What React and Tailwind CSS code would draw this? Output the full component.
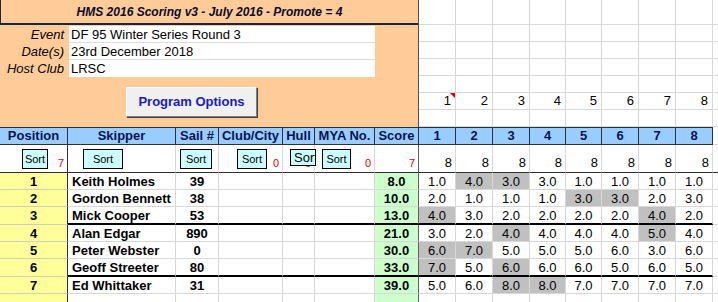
const raceCols = ['w-[37px]', 'w-[37px]', 'w-[37px]', 'w-[36px]', 'w-[36px]', 'w-[37px]', 'w-[37px]', 'w-[37px]'];

const rows = [
  { pos: 1, name: 'Keith Holmes', sail: '39', score: '8.0', r: [1, 4, 3, 3, 1, 1, 1, 1], d: [1, 2] },
  { pos: 2, name: 'Gordon Bennett', sail: '38', score: '10.0', r: [2, 1, 1, 1, 3, 3, 2, 3], d: [4, 5] },
  { pos: 3, name: 'Mick Cooper', sail: '53', score: '13.0', r: [4, 3, 2, 2, 2, 2, 4, 2], d: [0, 6], sep: true },
  { pos: 4, name: 'Alan Edgar', sail: '890', score: '21.0', r: [3, 2, 4, 4, 4, 4, 5, 4], d: [2, 6] },
  { pos: 5, name: 'Peter Webster', sail: '0', score: '30.0', r: [6, 7, 5, 5, 5, 6, 3, 6], d: [0, 1] },
  { pos: 6, name: 'Geoff Streeter', sail: '80', score: '33.0', r: [7, 5, 6, 6, 6, 5, 6, 5], d: [0, 2], sep: true },
  { pos: 7, name: 'Ed Whittaker', sail: '31', score: '39.0', r: [5, 6, 8, 8, 7, 7, 7, 7], d: [2, 3] },
];

const heads = [
  ['Position', 'w-[68px]'],
  ['Skipper', 'w-[108px]'],
  ['Sail #', 'w-[43px]'],
  ['Club/City', 'w-[64px]'],
  ['Hull', 'w-[32px]'],
  ['MYA No.', 'w-[60px]'],
  ['Score', 'w-[44px]'],
];

function SortButton({ className }) {
  return (
    <div className={`absolute top-[4px] flex items-center justify-center border border-black bg-[#ccffff] text-[11px] leading-none text-black ${className}`}>
      Sort
    </div>
  );
}

function TopRight() {
  const heights = ['h-[25px]', 'h-[17px]', 'h-[17px]', 'h-[17px]', 'h-[17px]', 'h-[17px]', 'h-[17px]'];
  return (
    <div className="flex flex-col">
      {heights.map((h, ri) => (
        <div key={ri} className={`flex ${h}`}>
          {raceCols.map((w, ci) => (
            <div key={ci} className={`relative ${w} border-b border-r border-[#d8d8d8] flex items-center justify-end pr-[4px] text-[13px]`}>
              {ri === 5 ? ci + 1 : ''}
              {ri === 5 && ci === 0 && (
                <div className="absolute right-0 top-0 w-0 h-0 border-l-[5px] border-l-transparent border-t-[5px] border-t-[#e00000]" />
              )}
            </div>
          ))}
          <div className="w-[5px] border-b border-[#d8d8d8]" />
        </div>
      ))}
    </div>
  );
}

function Header() {
  return (
    <div className="flex h-[18px]">
      {heads.map(([t, w]) => (
        <div key={t} className={`${w} bg-[#99ccff] border-t border-b border-r border-[#303030] flex items-center justify-center font-bold text-[13px] text-[#0c1450]`}>
          {t}
        </div>
      ))}
      {raceCols.map((w, i) => (
        <div key={i} className={`${w} bg-[#99ccff] border-t border-b border-r border-[#303030] flex items-center justify-center font-bold text-[13px] text-[#0c1450]`}>
          {i + 1}
        </div>
      ))}
      <div className="w-[5px] border-b border-[#d8d8d8]" />
    </div>
  );
}

function SortRow() {
  const red = 'text-[11px] text-[#e00000] leading-none';
  const cell = 'relative h-[28px] border-b border-r flex items-end justify-end pr-[3px] pb-[3px]';
  return (
    <div className="flex">
      <div className={`${cell} w-[68px] border-b-[#303030] border-r-[#303030]`}>
        <SortButton className="left-[22px] w-[26px] h-[20px]" />
        <span className={red}>7</span>
      </div>
      <div className={`${cell} w-[108px] border-b-[#303030] border-r-[#d8d8d8]`}>
        <SortButton className="left-[15px] w-[40px] h-[20px]" />
      </div>
      <div className={`${cell} w-[43px] border-b-[#303030] border-r-[#d8d8d8]`}>
        <SortButton className="left-[4px] w-[32px] h-[20px]" />
      </div>
      <div className={`${cell} w-[64px] border-b-[#303030] border-r-[#d8d8d8]`}>
        <SortButton className="left-[18px] w-[30px] h-[20px]" />
        <span className={red}>0</span>
      </div>
      <div className={`${cell} w-[32px] border-b-[#303030] border-r-[#d8d8d8]`}>
        <span className={red}>0</span>
        <div className="absolute top-[4px] left-[7px] w-[26px] h-[17px] pl-[3px] pt-[1px] overflow-hidden whitespace-nowrap border border-black bg-[#ccffff] text-[13px] leading-[13px]">
          Sort
        </div>
      </div>
      <div className={`${cell} w-[60px] border-b-[#303030] border-r-[#d8d8d8]`}>
        <SortButton className="left-[7px] w-[29px] h-[20px]" />
        <span className={red}>0</span>
      </div>
      <div className={`${cell} w-[44px] border-b-[#303030] border-r-[#606060]`}>
        <span className={red}>7</span>
      </div>
      {raceCols.map((w, i) => (
        <div key={i} className={`${cell} ${w} border-b-[#303030] border-r-[#d8d8d8] pb-[2px]`}>
          <span className="text-[13px] leading-none">8</span>
        </div>
      ))}
      <div className="w-[5px] h-[28px] border-b border-[#303030]" />
    </div>
  );
}

function DataRow({ row }) {
  const h = row.sep ? 'h-[18px]' : 'h-[17px]';
  const b = row.sep ? 'border-b-2 border-b-black' : 'border-b border-b-[#d8d8d8]';
  return (
    <div className="flex text-[13px] leading-none">
      <div className={`${h} w-[68px] bg-[#ffff99] border-b border-b-[#d0d0c0] border-r border-r-[#303030] flex items-center justify-center font-bold`}>
        {row.pos}
      </div>
      <div className={`${h} w-[108px] ${b} border-r border-r-[#d8d8d8] flex items-center pl-[4px] font-bold`}>
        {row.name}
      </div>
      <div className={`${h} w-[43px] ${b} border-r border-r-[#d8d8d8] flex items-center justify-center font-bold`}>
        {row.sail}
      </div>
      <div className={`${h} w-[64px] ${b} border-r border-r-[#d8d8d8]`} />
      <div className={`${h} w-[32px] ${b} border-r border-r-[#d8d8d8]`} />
      <div className={`${h} w-[60px] ${b} border-r border-r-[#d8d8d8]`} />
      <div className={`${h} w-[44px] bg-[#ccffcc] ${b} border-r border-r-[#606060] flex items-center justify-center font-bold`}>
        {row.score}
      </div>
      {row.r.map((v, i) => (
        <div key={i} className={`${h} ${raceCols[i]} ${b} border-r border-r-[#d8d8d8] flex items-center justify-center ${row.d.includes(i) ? 'bg-[#c0c0c0]' : ''}`}>
          {v.toFixed(1)}
        </div>
      ))}
      <div className={`${h} w-[5px] border-b border-b-[#d8d8d8]`} />
    </div>
  );
}

export default function App() {
  return (
    <div className="w-[718px] h-[302px] overflow-hidden bg-white text-black" style={{ fontFamily: '"Liberation Sans", Arial, sans-serif' }}>
      <div className="flex h-[127px]">
        <div className="w-[419px] h-[127px] bg-[#ffcc99] border-r border-r-[#505050] flex flex-col">
          <div className="h-[25px] border-l border-l-[#1c2540] border-b-2 border-b-[#1c2540] flex items-center justify-center italic font-bold text-[12px] text-[#0a0a28]">
            HMS 2016 Scoring v3 - July 2016 - Promote = 4
          </div>
          <div className="flex mt-[1px]">
            <div className="w-[68px] flex flex-col items-end pr-[4px] italic text-[13px]">
              <div className="h-[17px] leading-[17px]">Event</div>
              <div className="h-[17px] leading-[17px]">Date(s)</div>
              <div className="h-[17px] leading-[17px]">Host Club</div>
            </div>
            <div className="w-[306px] ml-[1px] bg-white flex flex-col text-[13px]">
              <div className="h-[17px] leading-[17px] pl-[2px] border-b border-[#dcdcdc]">DF 95 Winter Series Round 3</div>
              <div className="h-[17px] leading-[17px] pl-[2px] border-b border-[#dcdcdc]">23rd December 2018</div>
              <div className="h-[16px] leading-[17px] pl-[2px]">LRSC</div>
            </div>
          </div>
          <div className="pl-[126px] pt-[10px]">
            <div className="w-[131px] h-[30px] bg-[#f0f0f0] border border-t-white border-l-white border-b-[#808080] border-r-[#808080] shadow-[1px_1px_0_#404040] flex items-center justify-center font-bold text-[13px] text-[#1a1acc]">
              Program Options
            </div>
          </div>
        </div>
        <TopRight />
      </div>
      <Header />
      <SortRow />
      {rows.map(r => (
        <DataRow key={r.pos} row={r} />
      ))}
      <div className="flex h-[10px]">
        <div className="w-[68px] bg-[#ffff99] border-r border-r-[#303030]" />
        <div className="w-[108px] border-r border-[#d8d8d8]" />
        <div className="w-[43px] border-r border-[#d8d8d8]" />
        <div className="w-[64px] border-r border-[#d8d8d8]" />
        <div className="w-[32px] border-r border-[#d8d8d8]" />
        <div className="w-[60px] border-r border-[#d8d8d8]" />
        <div className="w-[44px] bg-[#ccffcc] border-r border-r-[#606060]" />
        {raceCols.map((w, i) => (
          <div key={i} className={`${w} border-r border-[#d8d8d8]`} />
        ))}
      </div>
    </div>
  );
}
